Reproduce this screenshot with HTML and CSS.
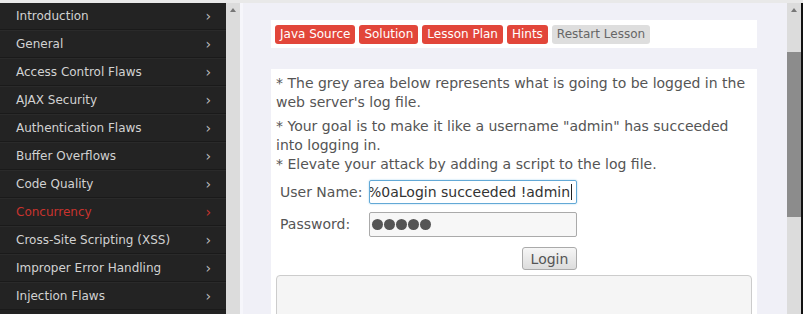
FILE: index.html
```html
<!DOCTYPE html>
<html lang="en">
<head>
  <meta charset="UTF-8">
  <title>WebGoat - Log Spoofing</title>
  <link rel="stylesheet" href="styles.css">
</head>
<body>

  <div class="topline"></div>

  <div class="frame">
    <nav class="menu">
      <ul>
        <li>Introduction <span class="chev">›</span></li>
        <li>General <span class="chev">›</span></li>
        <li>Access Control Flaws <span class="chev">›</span></li>
        <li>AJAX Security <span class="chev">›</span></li>
        <li>Authentication Flaws <span class="chev">›</span></li>
        <li>Buffer Overflows <span class="chev">›</span></li>
        <li>Code Quality <span class="chev">›</span></li>
        <li class="active">Concurrency <span class="chev">›</span></li>
        <li>Cross-Site Scripting (XSS) <span class="chev">›</span></li>
        <li>Improper Error Handling <span class="chev">›</span></li>
        <li>Injection Flaws <span class="chev">›</span></li>
      </ul>
    </nav>

    <div class="gutter"><span class="arrow"></span></div>

    <main class="lesson">
      <div class="toolbar">
        <span class="btn">Java Source</span>
        <span class="btn">Solution</span>
        <span class="btn">Lesson Plan</span>
        <span class="btn">Hints</span>
        <span class="btn grey">Restart Lesson</span>
      </div>

      <div class="panel">
        <p>* The grey area below represents what is going to be logged in the web server's log file.</p>
        <p>* Your goal is to make it like a username "admin" has succeeded into logging in.<br>* Elevate your attack by adding a script to the log file.</p>

        <div class="login">
          <label>User Name:</label>
          <div class="field focus"><span class="val">%0aLogin succeeded !admin</span><span class="caret"></span></div>
          <label>Password:</label>
          <div class="field pw"><i></i><i></i><i></i><i></i><i></i></div>
          <button class="go">Login</button>
        </div>

        <div class="log"></div>
      </div>
    </main>

    <div class="scrollbar">
      <span class="arrow"></span>
      <div class="thumb"></div>
    </div>
    <div class="edge"></div>
  </div>

</body>
</html>
```

FILE: styles.css
```css
html, body {
  margin: 0;
  height: 314px;
  overflow: hidden;
}

body {
  font-family: "DejaVu Sans", sans-serif;
  background: #f0f0f7;
  color: #555;
}

.topline {
  height: 3px;
  background: #e9e9e9;
}

.frame {
  display: flex;
  height: 311px;
}

/* left menu */
.menu {
  width: 226px;
  background: #232323;
  flex-shrink: 0;
}

.menu ul {
  list-style: none;
  margin: 0;
  padding: 0;
}

.menu li {
  display: flex;
  align-items: center;
  justify-content: space-between;
  height: 26px;
  padding: 0 15px 0 16px;
  font-size: 12px;
  color: #d2d2d2;
  border-top: 1px solid #2a2a2a;
  border-bottom: 1px solid #1a1a1a;
}

.menu li:first-child {
  height: 26px;
  border-top: none;
}

.menu li.active {
  color: #c9332e;
}

.chev {
  font-size: 14px;
  color: #bbb;
}

.menu li.active .chev {
  color: #c9332e;
}

/* scroll bars */
.gutter, .scrollbar {
  width: 14px;
  background: #dcdcdc;
  flex-shrink: 0;
}

.arrow {
  display: block;
  width: 0;
  height: 0;
  margin: 5px auto 0;
  border-left: 3px solid transparent;
  border-right: 3px solid transparent;
  border-bottom: 4px solid #777;
}

.scrollbar .thumb {
  margin-top: 40px;
  height: 165px;
  background: #8c8c8c;
}

.edge {
  width: 2px;
  background: #111;
}

/* lesson area */
.lesson {
  flex: 1;
  padding: 17px 0 0 28px;
  border-left: 3px solid #f6f6fb;
}

.toolbar {
  width: 478px;
  height: 28px;
  padding: 0 4px;
  background: white;
  display: flex;
  align-items: center;
  gap: 4px;
}

.btn {
  height: 19px;
  line-height: 19px;
  padding: 0 5px;
  font-size: 12px;
  color: white;
  background: #e2463a;
  border-radius: 3px;
}

.btn.grey {
  background: #dedede;
  color: #666;
}

.panel {
  width: 476px;
  margin-top: 21px;
  padding: 5px;
  background: white;
  font-size: 14px;
  line-height: 19px;
  height: 300px;
}

.panel p {
  margin: 0 0 5px;
}

.login {
  display: grid;
  grid-template-columns: 89px 208px;
  row-gap: 8px;
  align-items: center;
  margin: 6px 0 0 4px;
}

.login label {
  font-size: 14px;
}

.field {
  box-sizing: border-box;
  height: 24px;
  border: 1px solid #aaa;
  border-radius: 2px;
  display: flex;
  align-items: center;
  overflow: hidden;
  white-space: nowrap;
}

.field.focus {
  border-color: #63a9d6;
  box-shadow: 0 0 2px #9fd0ee;
  color: #333;
}

.field .val {
  margin-left: -2px;
}

.caret {
  width: 1px;
  height: 16px;
  background: #222;
  margin-left: 1px;
}

.field.pw {
  height: 25px;
  background: #f7f7f7;
  padding-left: 2px;
  gap: 1px;
}

.field.pw i {
  width: 11px;
  height: 11px;
  border-radius: 50%;
  background: #555;
}

.go {
  grid-column: 2;
  justify-self: end;
  margin-top: 2px;
  width: 55px;
  height: 23px;
  padding: 0;
  font-family: "DejaVu Sans", sans-serif;
  font-size: 14px;
  color: #555;
  background: linear-gradient(#f6f6f6, #dcdcdc);
  border: 1px solid #aaa;
  border-radius: 3px;
}

.log {
  margin-top: 5px;
  height: 60px;
  background: #f5f5f5;
  border: 1px solid #ccc;
  border-radius: 4px;
}
```
